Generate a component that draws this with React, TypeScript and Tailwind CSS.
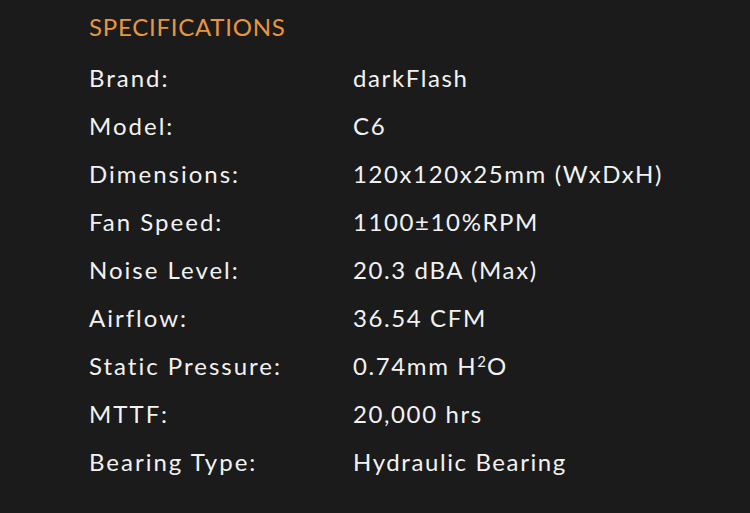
import React from "react";

const rows: [string, React.ReactNode][] = [
  ["Brand:", "darkFlash"],
  ["Model:", "C6"],
  ["Dimensions:", "120x120x25mm (WxDxH)"],
  ["Fan Speed:", "1100±10%RPM"],
  ["Noise Level:", "20.3 dBA (Max)"],
  ["Airflow:", "36.54 CFM"],
  ["Static Pressure:", <>0.74mm H<sup className="text-[15px] relative -top-[8px] tracking-normal mr-[1px]">2</sup>O</>],
  ["MTTF:", "20,000 hrs"],
  ["Bearing Type:", "Hydraulic Bearing"],
];

export default function App() {
  return (
    <div
      className="w-[750px] h-[513px] bg-[#1b1b1b] text-[#f2f2f2] pl-[89px] pt-[12px] overflow-hidden"
      style={{ fontFamily: "'Lato', 'DejaVu Sans', sans-serif" }}
    >
      <div className="text-[#e8963f] text-[24px] leading-[30px] tracking-[0.75px]">SPECIFICATIONS</div>
      <div className="mt-[12px] grid grid-cols-[264px_1fr]">
        {rows.map(([k, v], i) => (
          <React.Fragment key={i}>
            <div className="text-[24px] leading-[48px] tracking-[2px] whitespace-nowrap">{k}</div>
            <div className="text-[24px] leading-[48px] tracking-[1.6px] whitespace-nowrap">{v}</div>
          </React.Fragment>
        ))}
      </div>
    </div>
  );
}
